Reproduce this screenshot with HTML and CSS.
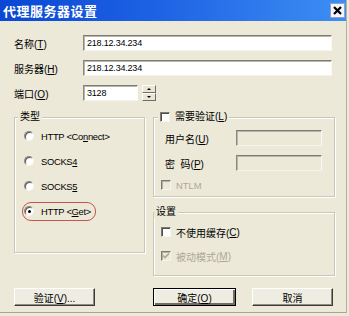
FILE: index.html
```html
<!DOCTYPE html>
<html lang="zh-CN">
<head>
  <meta charset="UTF-8">
  <title>代理服务器设置</title>
  <link rel="stylesheet" href="styles.css">
</head>
<body>

<div class="window">
  <div class="titlebar">
    <span class="title">代理服务器设置</span>
    <span class="close">
      <svg width="9" height="9" viewBox="0 0 9 9"><path d="M1 1 L8 8 M8 1 L1 8" stroke="#000" stroke-width="2.2"/></svg>
    </span>
  </div>

  <div class="content">
    <div class="fields">
      <div class="field">
        <label>名称(<u>T</u>)</label>
        <div class="text">218.12.34.234</div>
      </div>
      <div class="field">
        <label>服务器(<u>H</u>)</label>
        <div class="text">218.12.34.234</div>
      </div>
      <div class="field">
        <label>端口(<u>O</u>)</label>
        <div class="text port">3128</div>
        <div class="spin">
          <span class="spin-btn"><i class="up"></i></span>
          <span class="spin-btn"><i class="down"></i></span>
        </div>
      </div>
    </div>

    <div class="groups">
      <fieldset class="group type-group">
        <legend class="legend-type">类型</legend>
        <div class="radios">
          <div class="opt"><span class="radio"></span>HTTP &lt;Co<u>n</u>nect&gt;</div>
          <div class="opt"><span class="radio"></span>SOCKS<u>4</u></div>
          <div class="opt"><span class="radio"></span>SOCKS<u>5</u></div>
          <div class="opt"><span class="oval"><span class="radio checked"></span>HTTP &lt;<u>G</u>et&gt;</span></div>
        </div>
      </fieldset>

      <div class="right-col">
        <fieldset class="group auth-group">
          <legend class="legend-auth"><span class="check"></span>需要验证(<u>L</u>)</legend>
          <div class="auth">
            <div class="auth-row">
              <label>用户名(<u>U</u>)</label>
              <div class="text off"></div>
            </div>
            <div class="auth-row">
              <label>密&nbsp;&nbsp;码(<u>P</u>)</label>
              <div class="text off"></div>
            </div>
            <div class="chk-row dim"><span class="check off"></span>NTLM</div>
          </div>
        </fieldset>

        <fieldset class="group settings-group">
          <legend class="legend-set">设置</legend>
          <div class="settings">
            <div class="chk-row"><span class="check"></span>不使用缓存(<u>C</u>)</div>
            <div class="chk-row dim">
              <span class="check off">
                <svg width="8" height="8" viewBox="0 0 8 8"><path d="M1 3.5 L3 5.5 L7 1.5" fill="none" stroke="#aca899" stroke-width="1.6"/></svg>
              </span>被动模式(<u>M</u>)
            </div>
          </div>
        </fieldset>
      </div>
    </div>

    <div class="buttons">
      <button class="btn">验证(<u>V</u>)...</button>
      <button class="btn default">确定(<u>O</u>)</button>
      <button class="btn">取消</button>
    </div>
  </div>
</div>

</body>
</html>
```

FILE: styles.css
```css
body {
  margin: 0;
  background-color: #ece9d8;
  font-family: "Liberation Sans", "Noto Sans CJK SC", sans-serif;
  font-size: 10px;
  color: #000;
}
.window {
  width: 347px;
  height: 313px;
  box-sizing: border-box;
  border-right: 1px solid #b5b2a3;
  border-bottom: 1px solid #a8a596;
}
.titlebar {
  height: 21px;
  display: flex;
  align-items: center;
  justify-content: space-between;
  padding: 0 0 0 3px;
  background: linear-gradient(to right, #0a47d4, #1d62e4 45%, #3d8ef4);
}
.title {
  color: white;
  font-family: "Noto Sans CJK SC", sans-serif;
  font-weight: bold;
  font-size: 13px;
  letter-spacing: 0.5px;
  line-height: 21px;
}
.close {
  width: 13px;
  height: 13px;
  display: flex;
  align-items: center;
  justify-content: center;
  background-color: #f3f5fb;
  border: 1px solid #8da4c8;
  margin-right: 1px;
}
.content {
  padding: 14px 0 0 14px;
}
.fields {
  display: flex;
  flex-direction: column;
  gap: 9px;
}
.field {
  display: flex;
  align-items: center;
  height: 16px;
}
.field label {
  width: 69px;
}
.text {
  width: 249px;
  height: 16px;
  box-sizing: border-box;
  background-color: white;
  border: 1px solid;
  border-color: #7d7b73 #fbfaf6 #f4f3ee #8a8880;
  box-shadow: inset 1px 1px 0 #b9b7ad;
  padding-left: 3px;
  font-size: 9px;
  line-height: 14px;
  letter-spacing: -0.2px;
}
.text.port {
  width: 55px;
}
.text.off {
  width: 86px;
  background-color: #ece9d8;
}
.spin {
  display: flex;
  flex-direction: column;
  margin-left: 4px;
  width: 14px;
  height: 16px;
}
.spin-btn {
  flex: 1;
  display: flex;
  align-items: center;
  justify-content: center;
  box-sizing: border-box;
  border: 1px solid;
  border-color: #fff #6f6d66 #6f6d66 #fff;
  background-color: #e9e6d6;
}
.spin-btn i {
  width: 0;
  height: 0;
  border-left: 2px solid transparent;
  border-right: 2px solid transparent;
}
.spin-btn .up {
  border-bottom: 2px solid #000;
}
.spin-btn .down {
  border-top: 2px solid #000;
}

.groups {
  display: flex;
  margin-top: 10px;
}
.group {
  margin: 0;
  padding: 0;
  box-sizing: border-box;
  border: 1px solid #cac7b7;
  box-shadow: 1px 1px 0 #fff, inset 1px 1px 0 #fff;
}
.group legend {
  padding: 0 2px;
  line-height: 12px;
  background-color: #ece9d8;
  display: flex;
  align-items: center;
}
.legend-type {
  margin-left: 3px;
}
.legend-auth {
  margin-left: 4px;
}
.legend-set {
  margin-left: 0;
}
.type-group {
  width: 131px;
  height: 142px;
}
.radios {
  display: flex;
  flex-direction: column;
  gap: 11px;
  padding: 6px 0 0 9px;
}
.opt {
  display: flex;
  align-items: center;
  height: 14px;
  font-size: 9.4px;
  letter-spacing: -0.3px;
}
.radio {
  width: 10px;
  height: 10px;
  box-sizing: border-box;
  border-radius: 50%;
  background-color: white;
  border: 1px solid;
  border-color: #8a8880 #f5f4ef #f5f4ef #8a8880;
  box-shadow: inset 1px 1px 0 #5a5852;
  margin-right: 7px;
  display: flex;
  align-items: center;
  justify-content: center;
}
.radio.checked::after {
  content: "";
  width: 3px;
  height: 3px;
  border-radius: 50%;
  background-color: #000;
}
.oval {
  display: flex;
  align-items: center;
  height: 19px;
  box-sizing: border-box;
  border: 1px solid #c8534c;
  border-radius: 9px;
  padding: 0 4px 0 1px;
  margin-left: -2px;
}

.right-col {
  display: flex;
  flex-direction: column;
  margin-left: 8px;
  width: 182px;
  gap: 9px;
}
.auth-group {
  height: 86px;
}
.auth {
  display: flex;
  flex-direction: column;
  gap: 9px;
  padding: 7px 0 0 7px;
}
.auth-row {
  display: flex;
  align-items: center;
  height: 16px;
}
.auth-row label {
  width: 71px;
  margin-left: 4px;
}
.check {
  width: 10px;
  height: 10px;
  box-sizing: border-box;
  background-color: white;
  border: 1px solid;
  border-color: #7d7b73 #f5f4ef #f5f4ef #7d7b73;
  box-shadow: inset 1px 1px 0 #4f4d48;
  margin-right: 5px;
  display: flex;
  align-items: center;
  justify-content: center;
  flex-shrink: 0;
}
.check.off {
  background-color: #ece9d8;
  box-shadow: inset 1px 1px 0 #b4b1a4;
}
.chk-row {
  display: flex;
  align-items: center;
  height: 10px;
}
.dim {
  color: #aca899;
  font-size: 9.4px;
}
.settings-group {
  height: 70px;
}
.settings {
  display: flex;
  flex-direction: column;
  gap: 14px;
  padding: 9px 0 0 7px;
}
.settings .dim {
  font-size: 10px;
}

.buttons {
  display: flex;
  margin-top: 12px;
}
.btn {
  width: 81px;
  height: 18px;
  box-sizing: border-box;
  padding: 0;
  font-family: "Liberation Sans", "Noto Sans CJK SC", sans-serif;
  font-size: 10px;
  color: #000;
  background-color: #efede2;
  border: 1px solid;
  border-color: #fff #3c3b37 #3c3b37 #fff;
  box-shadow: inset -1px -1px 0 #8d8b82;
}
.btn.default {
  width: 83px;
  margin-left: 58px;
  border: 1px solid #000;
  box-shadow: inset 1px 1px 0 #fff, inset -2px -2px 0 #6f6d66;
}
.btn + .btn + .btn {
  margin-left: 16px;
}
```
